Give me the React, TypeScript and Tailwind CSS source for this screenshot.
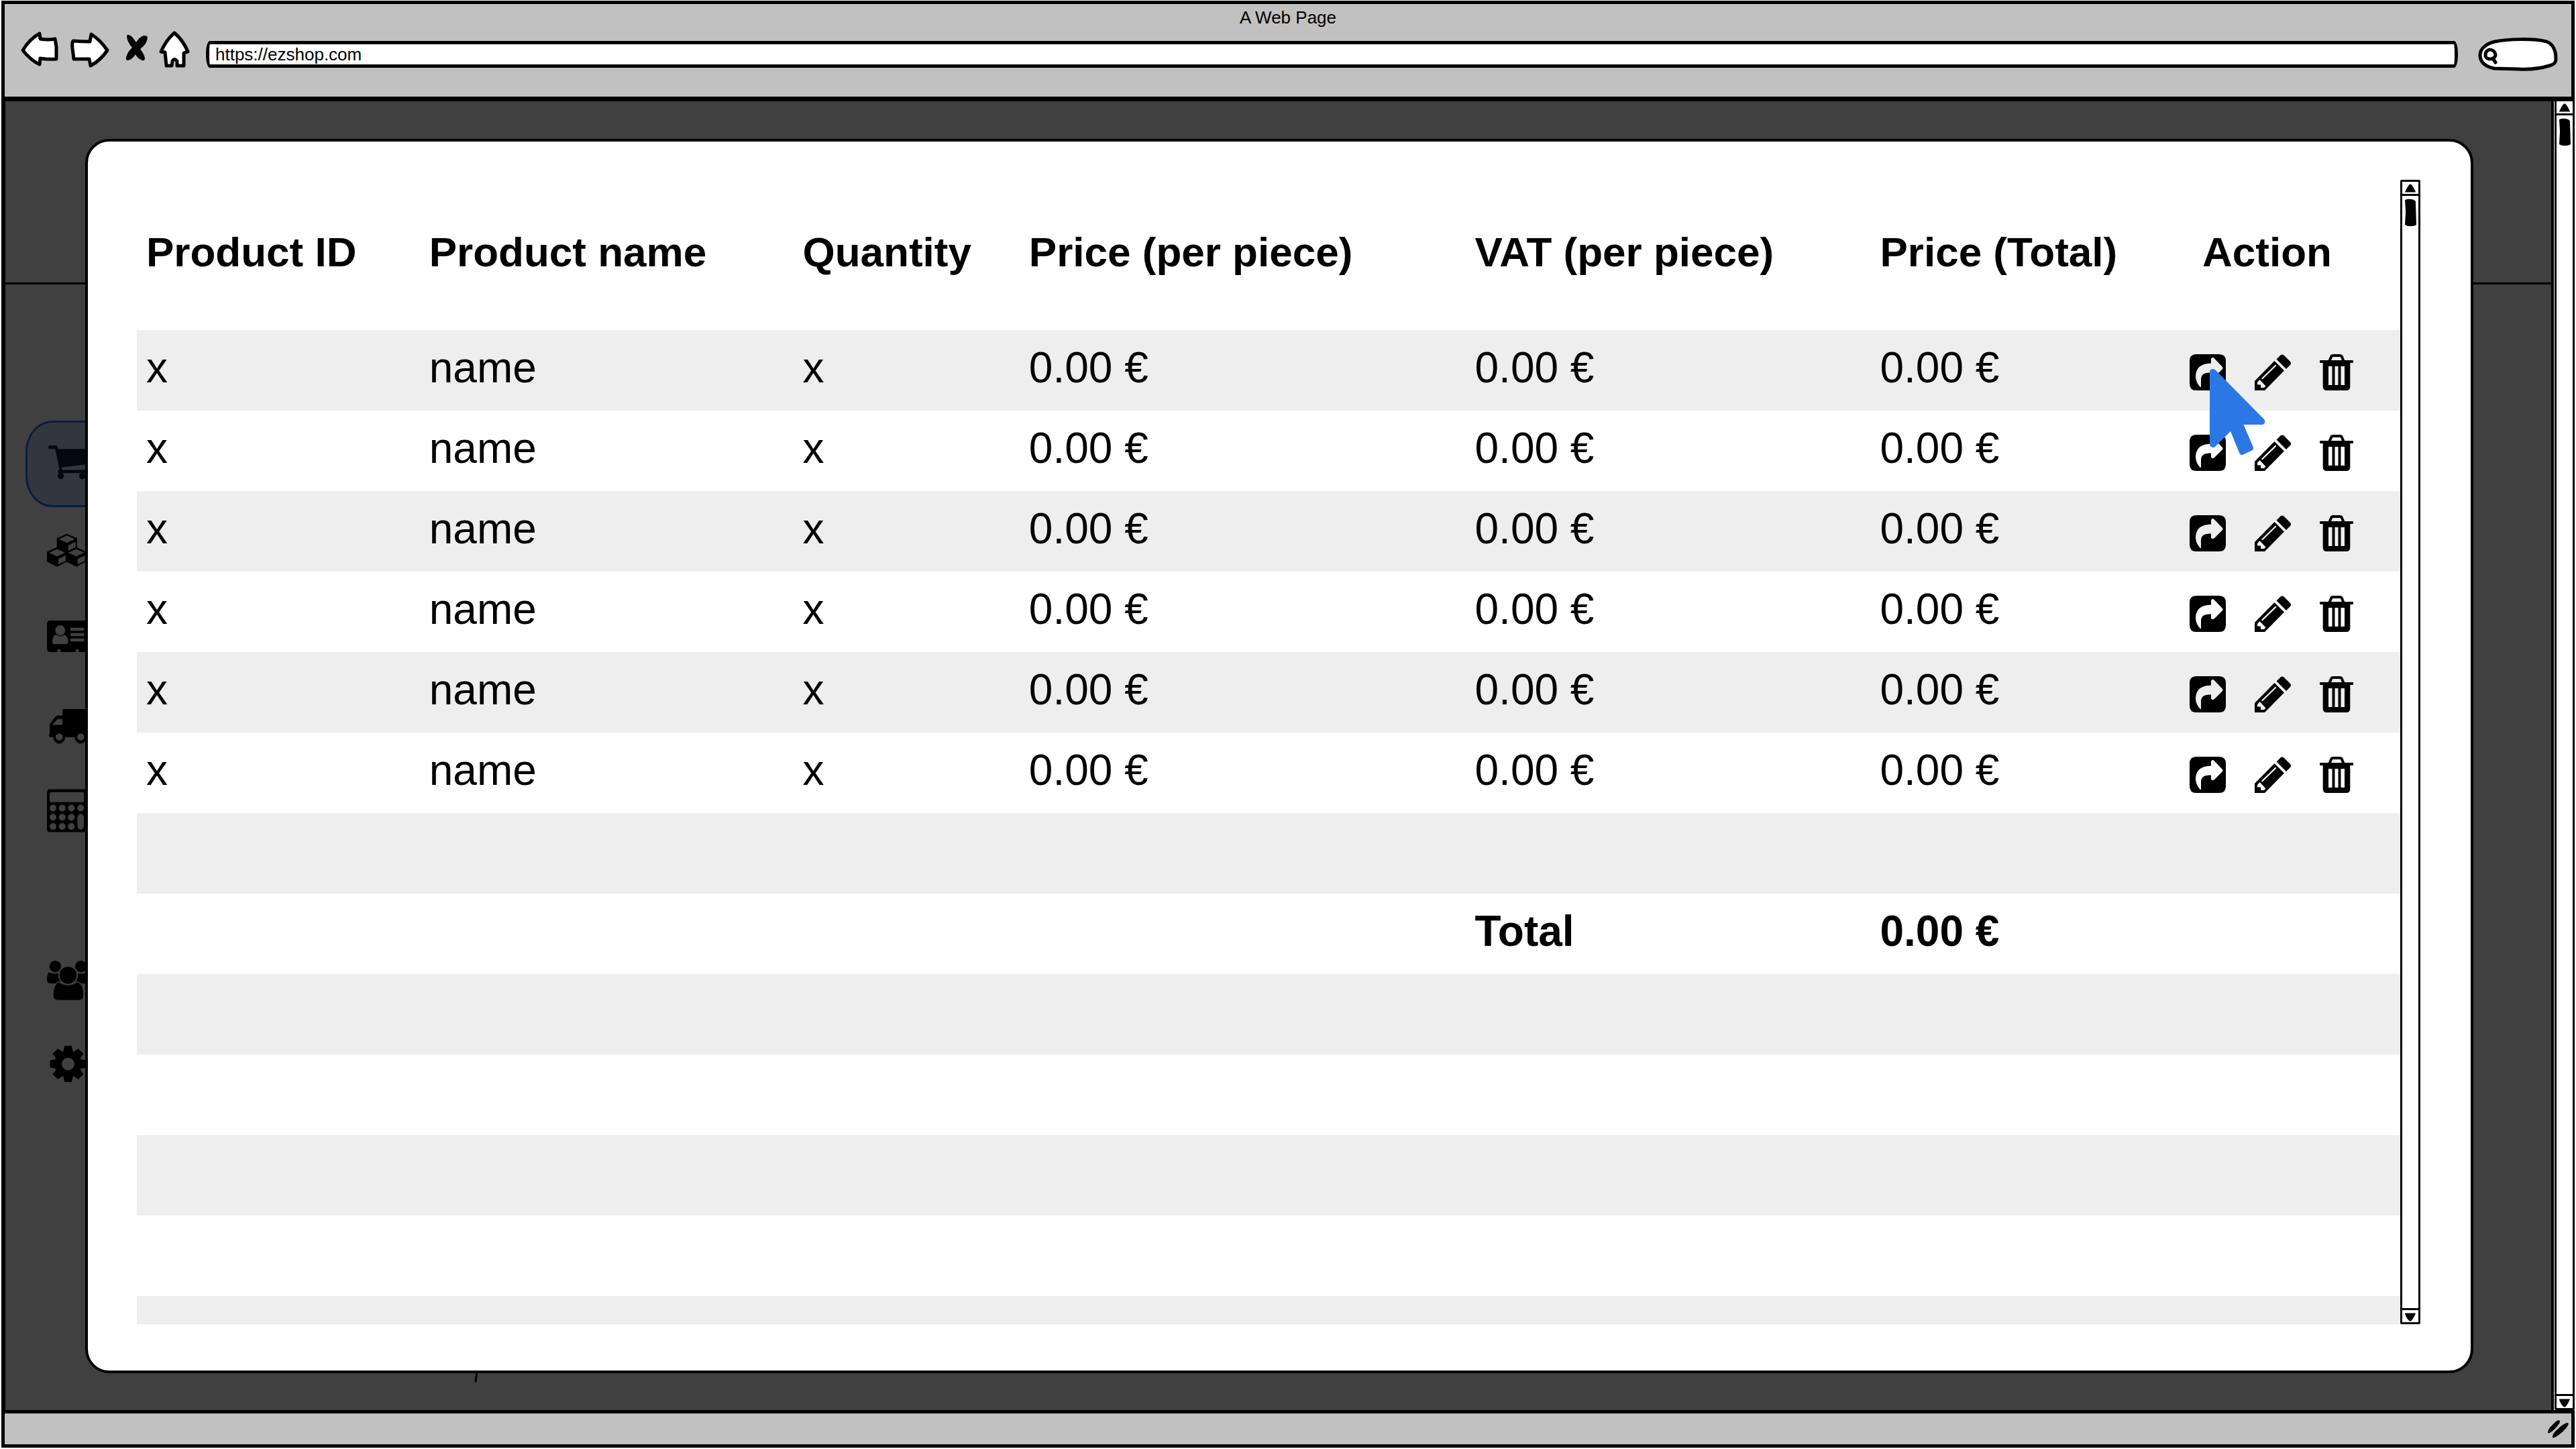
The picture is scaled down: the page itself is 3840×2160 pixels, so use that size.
import type { ReactNode } from "react";

const PAGE = "#404040";

const products = Array.from({ length: 6 }, (_, i) => ({
  key: i,
  id: "x",
  name: "name",
  quantity: "x",
  price: "0.00 €",
  vat: "0.00 €",
  total: "0.00 €",
}));

const bodyCell = "h-[120px] p-0 pb-2 pl-[14px] align-middle";
const headCell = "h-[224px] p-0 pb-2 pl-[14px] align-middle font-bold whitespace-nowrap";

/* ---------- Browser toolbar drawings ---------- */

function ToolButton({ label, width, viewBox, children }: { label: string; width: string; viewBox: string; children: ReactNode }) {
  return (
    <button type="button" aria-label={label} className={`${width} h-[70px] shrink-0`}>
      <svg viewBox={viewBox} className="size-full" fill="white" stroke="black" strokeWidth="5" strokeLinejoin="round" strokeLinecap="round">
        {children}
      </svg>
    </button>
  );
}

function SearchBox() {
  return (
    <div className="relative mr-[19px] h-[50px] w-[120px] shrink-0">
      <svg viewBox="0 0 120 50" className="absolute inset-0 size-full" fill="white" stroke="black" strokeWidth="5" strokeLinejoin="round" strokeLinecap="round">
        <path d="M3 26C3 17 12 9 25 6C45 2 82 1 102 6C113 10 116 20 116 32C116 38 113 40 106 42C90 47 78 48 60 47L24 46C10 43 3 36 3 26Z" />
        <path d="M11 26C11 15 25 16 26 26C25 34 11 34 11 26Z" />
        <path d="M22 31L26 37" />
      </svg>
      <input type="search" aria-label="Search" className="absolute inset-y-0 right-2 left-8 bg-transparent text-[26px] outline-none" />
    </div>
  );
}

/* ---------- Scroll bar ---------- */

function Scrollbar({ label }: { label: string }) {
  return (
    <div aria-label={label} className="flex w-[30px] shrink-0 flex-col rounded-xs border-[3px] border-black bg-white">
      <button type="button" aria-label="Scroll up" className="flex h-[21px] shrink-0 justify-center border-b-[3px] border-black pt-[3px]">
        <svg viewBox="0 0 16 12" className="h-[13px] w-[18px] shrink-0"><path d="M0.500 11.500C3 6 6 0.500 8 0.500C10 0.500 13 6 15.500 11.500Z" /></svg>
      </button>
      <svg viewBox="0 0 16 42" preserveAspectRatio="none" className="mx-auto mt-1 h-[42px] w-[17px] shrink-0">
        <path d="M0 2C4 0 12 0 15 4L16 39C12 42 4 42 0 39L1 20Z" />
      </svg>
      <div className="flex-1" />
      <button type="button" aria-label="Scroll down" className="flex h-[21px] shrink-0 justify-center border-t-[3px] border-black pt-1">
        <svg viewBox="0 0 16 12" className="h-[13px] w-[18px] shrink-0"><path d="M0.500 0.500H15.500C13 6 10 11.500 8 11.500C6 11.500 2 7 0.500 0.500Z" /></svg>
      </button>
    </div>
  );
}

/* ---------- Sidebar ---------- */

function MenuIcon({ children }: { children: ReactNode }) {
  return <svg viewBox="0 0 84 96" preserveAspectRatio="none" className="h-[129px] w-[84px] shrink-0">{children}</svg>;
}

function MenuLink({ label, children }: { label: string; children: ReactNode }) {
  return (
    <a href="#" aria-label={label} className="block h-[129px] pl-8">
      <MenuIcon>{children}</MenuIcon>
    </a>
  );
}

function AdminLink({ label, children }: { label: string; children: ReactNode }) {
  return (
    <a href="#" aria-label={label} className="block h-24 pl-8">
      <svg viewBox="0 0 84 96" className="h-24 w-[84px]">{children}</svg>
    </a>
  );
}

function Cube({ x, y }: { x: number; y: number }) {
  return (
    <g transform={`translate(${x} ${y})`}>
      <path d="M15 0L30 5V16L15 21.500L0 16V5Z" />
      <path d="M15 2L27 6L15 10L3 6Z" fill={PAGE} />
      <path d="M17 13L28 9V15L17 19Z" fill={PAGE} />
    </g>
  );
}

function Sidebar() {
  return (
    <nav aria-label="Main" className="w-60 pt-[203px] pl-[30px]">
      <a href="#" aria-label="Cart" className="flex h-[129px] items-center rounded-[40px/46px] border-[3px] border-[#081d3f] bg-[#32373f] pl-[29px]">
        <MenuIcon>
          <path d="M4 29.5H14L21 56" fill="none" stroke="#03070f" strokeWidth="4" strokeLinecap="round" strokeLinejoin="round" />
          <path d="M12 31.5H80L75 47L20 52Z" fill="#03070f" />
          <path d="M18 56.5H70" stroke="#03070f" strokeWidth="3.5" strokeLinecap="round" />
          <ellipse cx="20.5" cy="61.5" rx="4.6" ry="3.5" fill="#03070f" />
          <ellipse cx="52.5" cy="61.5" rx="4.6" ry="3.5" fill="#03070f" />
        </MenuIcon>
      </a>
      <MenuLink label="Inventory">
        <Cube x={14.7} y={29.5} />
        <Cube x={0} y={44.5} />
        <Cube x={28.7} y={44.5} />
      </MenuLink>
      <MenuLink label="Contacts">
        <rect y="29.7" width="80" height="35" rx="4" />
        <g fill={PAGE}>
          <path d="M13 45.5H26C30 47 32 51 31.7 54L30 56H9.5L8 54C8 50 9 47 13 45.5Z" />
          <ellipse cx="19.7" cy="40.7" rx="7.8" ry="6.2" stroke="black" strokeWidth="1" />
          <rect x="35" y="37.7" width="20.5" height="3.4" rx="1" />
          <rect x="35" y="43.7" width="20.5" height="3.4" rx="1" />
          <rect x="35" y="49.7" width="20.5" height="3.4" rx="1" />
          <rect x="15.7" y="61.7" width="4.3" height="3" />
          <rect x="43" y="61.7" width="4.3" height="3" />
        </g>
      </MenuLink>
      <MenuLink label="Deliveries">
        <path d="M25 32H80V63H4V49L12 41Q14 39.300 17 39.300H23V34Q23 32 25 32Z" />
        <path d="M4.500 61H10" stroke="black" strokeWidth="3.5" strokeLinecap="round" />
        <path d="M9 49.500V48.300L16 43H23V49.500Z" fill={PAGE} />
        <ellipse cx="18.3" cy="63" rx="7" ry="5.500" fill={PAGE} stroke="black" strokeWidth="3.500" />
        <ellipse cx="50.3" cy="63" rx="7" ry="5.500" fill={PAGE} stroke="black" strokeWidth="3.500" />
      </MenuLink>
      <MenuLink label="Accounting">
        <rect y="25" width="60" height="47.500" rx="3.500" />
        <g fill={PAGE}>
          <rect x="4" y="28.300" width="51.300" height="11" rx="2" />
          {[9, 22.7, 36.3, 50.3].map((x) => <ellipse key={x} cx={x} cy="45.7" rx="5" ry="3.7" />)}
          {[9, 22.7, 36.3].map((x) => <ellipse key={x} cx={x} cy="56" rx="5" ry="3.7" />)}
          {[9, 22.7, 36.3].map((x) => <ellipse key={x} cx={x} cy="66.3" rx="5" ry="3.7" />)}
          <rect x="45.5" y="52.300" width="9.600" height="17.500" rx="4.500" />
        </g>
      </MenuLink>
      <div className="mt-36 flex flex-col gap-7">
        <AdminLink label="Users">
          <circle cx="12.500" cy="24.700" r="8.700" />
          <circle cx="50.700" cy="24.700" r="8.700" />
          <path d="M3 33.500Q12 37 20 34V50H5Q0 50 0 44Q0 36 3 33.500Z" />
          <path d="M60 33.500Q51 37 43 34V50H58Q63 50 63 44Q63 36 60 33.500Z" />
          <path d="M18 47.500Q31 56 45 47.500Q55 50 55 68Q55 75.500 47 75.500H17Q9 75.500 9 68Q9 50 18 47.500Z" stroke={PAGE} strokeWidth="1.500" />
          <circle cx="31.500" cy="37.700" r="13.800" stroke={PAGE} strokeWidth="2" />
        </AdminLink>
        <AdminLink label="Settings">
          <g transform="translate(31.5 46)">
            <circle r="20" />
            {[0, 45, 90, 135, 180, 225, 270, 315].map((a) => (
              <path key={a} transform={`rotate(${a})`} d="M-7.500 -17L-5.500 -26Q-5.300 -27 -4.500 -27H4.500Q5.300 -27 5.500 -26L7.500 -17Z" />
            ))}
            <circle r="9.300" fill={PAGE} />
          </g>
        </AdminLink>
      </div>
    </nav>
  );
}

/* ---------- Row actions ---------- */

function ShareIcon() {
  return (
    <svg viewBox="0 0 54 54" className="size-[54px]">
      <path fillRule="evenodd" d="M10 0H44Q54 0 54 10V44Q54 54 44 54H10Q0 54 0 44V10Q0 0 10 0ZM16 49C11 44 9 38 9 32C10 19 18 14 32 13.500V7Q34 3.500 37 6.500L48.500 18.500Q50.500 20.500 48.500 22.500L37 34Q34 36.500 32 33.500V27.500C21 27 17 31 17 38V48Q17 49.500 16 49Z" />
    </svg>
  );
}

function PencilIcon() {
  return (
    <svg viewBox="0 0 54 54" className="size-[54px]">
      <path d="M32.500 7.500L38.500 1.500Q41 -0.500 43.500 1.500L53 11Q55 13.500 53 16L47 22Z" />
      <path fillRule="evenodd" d="M29.500 10L44 24.500L15 54H0V40ZM10 36L11.500 37.500L32.500 17L31 15.500ZM4 42L7.500 38L16.500 47.500L14 50H9V45.500H4Z" />
    </svg>
  );
}

function TrashIcon() {
  return (
    <svg viewBox="0 0 50 54" className="h-[54px] w-[50px]">
      <path d="M14.500 10L17 4Q17.800 2 20 2H30Q32.200 2 33 4L35.500 10" fill="none" stroke="black" strokeWidth="4" />
      <rect y="9" width="50" height="4" rx="1" />
      <path fillRule="evenodd" d="M4.700 12H45.300V48Q45.300 54 39.500 54H10.500Q4.700 54 4.700 48ZM13 18V46H18.500V18ZM22.500 18V46H27.500V18ZM31.500 18V46H37V18Z" />
    </svg>
  );
}

function Pointer() {
  return (
    <svg viewBox="0 0 82 128" className="pointer-events-none absolute top-[22px] left-[30px] z-10 h-32 w-[82px]" fill="#2b78e4">
      <path d="M0 5Q0 0 5 0Q7 0 9 2L81 75Q83 78 81.500 81Q80.500 83 78 83H50.500L65 117Q65.500 120 63 121.500L50 127.500Q46 129 44.500 126L31 93L9 115Q6 118 3 116.500Q0 115 0 112Z" />
    </svg>
  );
}

function RowActions({ pointed }: { pointed: boolean }) {
  return (
    <div className="flex items-center gap-[43px]">
      <button type="button" aria-label="Open" className="relative shrink-0">
        <ShareIcon />
        {pointed && <Pointer />}
      </button>
      <button type="button" aria-label="Edit" className="shrink-0"><PencilIcon /></button>
      <button type="button" aria-label="Delete" className="shrink-0"><TrashIcon /></button>
    </div>
  );
}

/* ---------- Table ---------- */

function EmptyRows({ count }: { count: number }) {
  return (
    <>
      {Array.from({ length: count }, (_, i) => (
        <tr key={i} className="odd:bg-[#eeeeee]">
          <td colSpan={7} className="h-[120px] p-0" />
        </tr>
      ))}
    </>
  );
}

function ProductTable() {
  return (
    <table className="w-full table-fixed border-collapse text-left text-[64px] leading-[80px]">
      <colgroup>
        <col className="w-[12.5%]" />
        <col className="w-[16.5%]" />
        <col className="w-[10%]" />
        <col className="w-[19.7%]" />
        <col className="w-[17.9%]" />
        <col className="w-[13%]" />
        <col />
      </colgroup>
      <thead className="text-[62px]">
        <tr>
          <th scope="col" className={headCell}>Product ID</th>
          <th scope="col" className={headCell}>Product name</th>
          <th scope="col" className={headCell}>Quantity</th>
          <th scope="col" className={headCell}>Price (per piece)</th>
          <th scope="col" className={headCell}>VAT (per piece)</th>
          <th scope="col" className={headCell}>Price (Total)</th>
          <th scope="col" className="h-[224px] p-0 pb-2 pl-14 align-middle font-bold">Action</th>
        </tr>
      </thead>
      <tbody>
        {products.map((p, i) => (
          <tr key={p.key} className="odd:bg-[#eeeeee]">
            <td className={bodyCell}>{p.id}</td>
            <td className={bodyCell}>{p.name}</td>
            <td className={bodyCell}>{p.quantity}</td>
            <td className={bodyCell}>{p.price}</td>
            <td className={bodyCell}>{p.vat}</td>
            <td className={bodyCell}>{p.total}</td>
            <td className="h-[120px] p-0 pt-1.5 pl-[37px] align-middle"><RowActions pointed={i === 0} /></td>
          </tr>
        ))}
        <EmptyRows count={1} />
        <tr className="font-bold odd:bg-[#eeeeee]">
          <td colSpan={4} className="p-0" />
          <th scope="row" className={bodyCell}>Total</th>
          <td className={bodyCell}>0.00 €</td>
          <td className="p-0" />
        </tr>
        <EmptyRows count={5} />
      </tbody>
    </table>
  );
}

export default function App() {
  return (
    <div className="flex min-h-screen flex-col bg-white px-0.5 pt-px pb-0.5 font-['Liberation_Sans',Arial,sans-serif] text-black">
      <header className="border-[5px] border-b-[7px] border-black bg-[#c1c1c1] pb-[28px]">
        <h1 className="text-center text-[26px] leading-[40px]">A Web Page</h1>
        <div className="flex h-[70px] items-center pl-[21px]">
          <ToolButton label="Back" width="w-17" viewBox="28 46 68 70">
            <path d="M34 75Q44 58 59 50L60 58Q72 60 82 58L84 70V88Q72 89 60 87L59 96Q46 90 34 75Z" />
          </ToolButton>
          <ToolButton label="Forward" width="w-19" viewBox="96 46 76 70">
            <path d="M109 61Q122 62 134 62L136 51Q150 60 160 75Q150 90 135 98L133 88H110L108 72Q107 62 109 61Z" />
          </ToolButton>
          <ToolButton label="Stop" width="w-15" viewBox="172 46 60 70">
            <path stroke="none" fill="black" d="M189 53Q191 50 197 55L203 63Q208 55 214 53Q220 53 220 56Q219 66 209 73Q216 82 216 88Q214 92 210 89Q205 87 202 81Q198 88 191 90Q187 90 188 86Q190 77 197 71Q189 62 189 53Z" />
          </ToolButton>
          <ToolButton label="Home" width="w-[75px]" viewBox="232 46 75 70">
            <path d="M260 49Q273 60 280 77L274 79V98H264V91Q260 86 257 91L256 98H248L246 78L240 77Q248 59 260 49Z" />
          </ToolButton>
          <input
            type="url"
            aria-label="Address"
            defaultValue="https://ezshop.com"
            className="mr-[30px] h-10 min-w-0 flex-1 rounded-[6px/18px] border-[5px] border-black bg-white pl-[9px] text-[26px] leading-[30px] outline-none"
          />
          <SearchBox />
        </div>
      </header>

      <div className="flex flex-1">
        <main className="relative flex-1 border-r-[4px] border-l-[6px] border-black bg-[#404040]">
          <div className="h-[273px] border-b-[3px] border-black" />
          <Sidebar />
          <svg viewBox="0 0 8 18" className="absolute bottom-[40px] left-[698px] h-[18px] w-2">
            <path d="M5 0L3 15" stroke="black" strokeWidth="3" strokeLinecap="round" />
          </svg>
          <div className="absolute inset-0 flex pt-14 pr-[116px] pb-[55px] pl-[119px]">
            <section aria-label="Products" className="flex min-w-0 flex-1 rounded-[36px] border-[4px] border-black bg-white pt-[57px] pr-[75px] pb-[69px] pl-[73px]">
              <div className="min-w-0 flex-1 overflow-hidden">
                <ProductTable />
              </div>
              <Scrollbar label="Product list scroll bar" />
            </section>
          </div>
        </main>
        <div className="-mt-[3px] ml-px flex">
          <Scrollbar label="Page scroll bar" />
        </div>
      </div>

      <footer className="flex h-[56px] items-center justify-end border-[5px] border-black bg-[#c1c1c1] pr-0.5">
        <svg viewBox="0 0 34 28" className="h-7 w-[34px]">
          <path d="M1 20Q1 14 8 8Q14 1 18 1Q20 2 18 6Q13 13 7 18Q3 21 1 20Z" />
          <path d="M8 27Q7 22 15 15Q24 6 30 5Q33 5 31 9Q26 17 17 23Q11 28 8 27Z" />
        </svg>
      </footer>
    </div>
  );
}
